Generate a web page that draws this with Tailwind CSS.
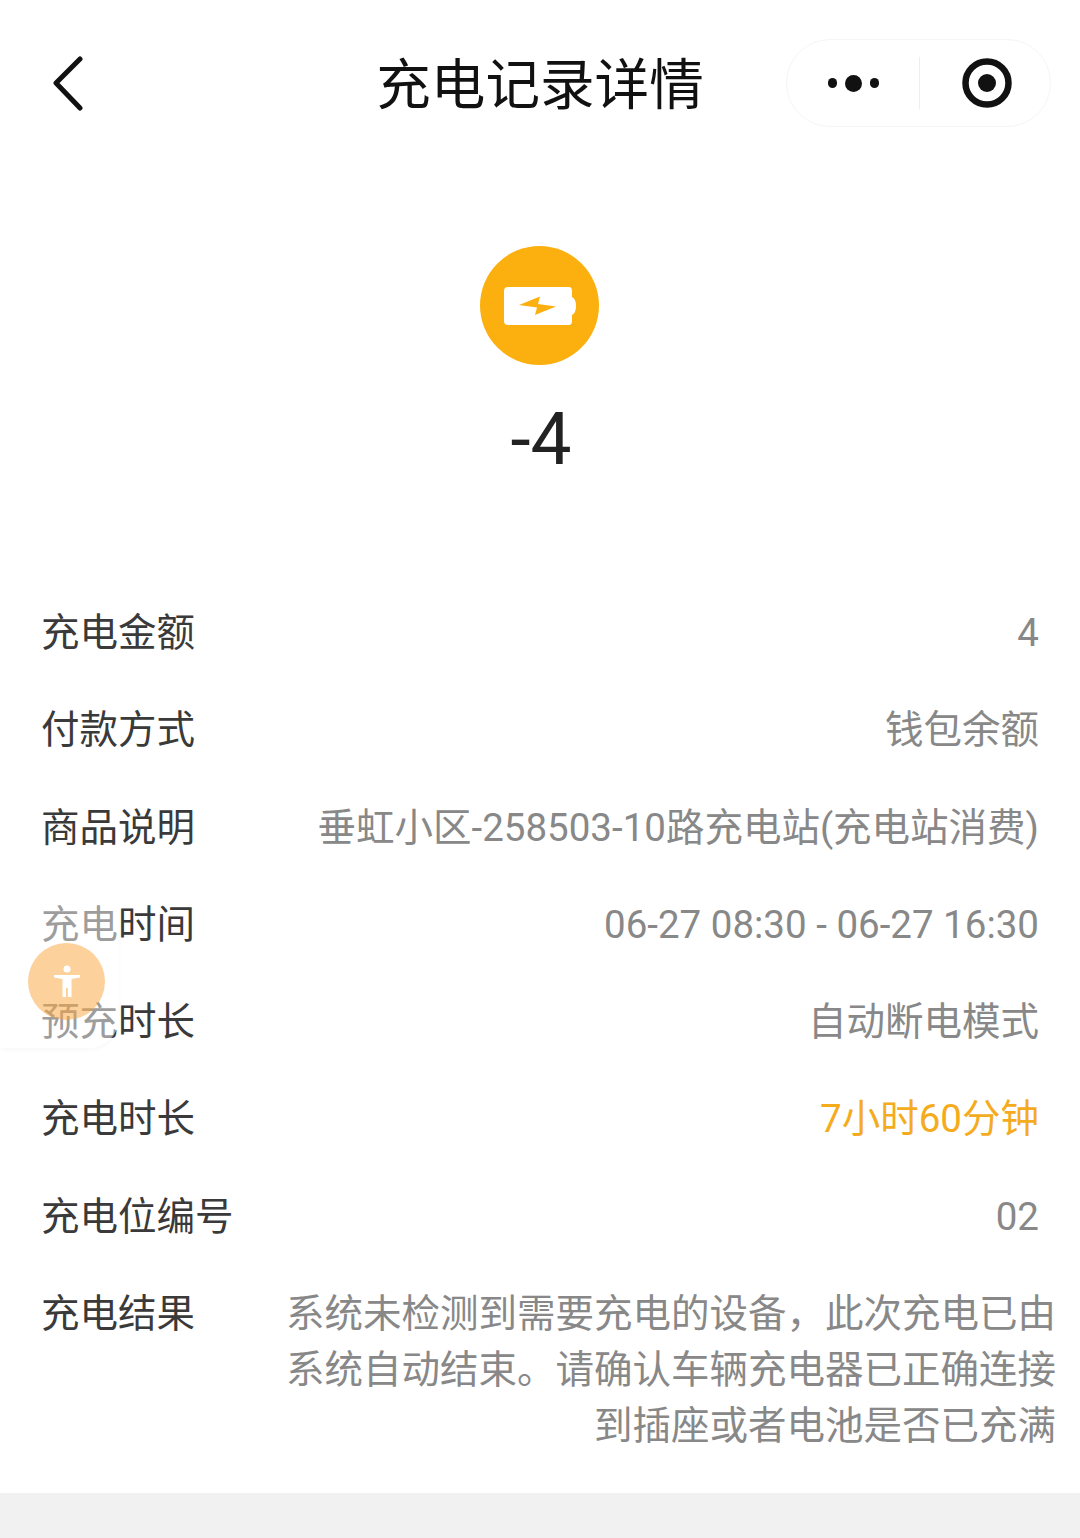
<!DOCTYPE html>
<html lang="zh-CN">
<head>
  <meta charset="UTF-8" />
  <meta name="viewport" content="width=device-width, initial-scale=1.0" />
  <title>充电记录详情</title>
  <script src="https://cdn.jsdelivr.net/npm/@tailwindcss/browser@4"></script>
</head>
<body class="bg-white font-['Roboto','Noto_Sans_CJK_SC',sans-serif] text-[#3a3a3a]">
  <div class="relative w-[1080px] h-[1538px] overflow-hidden flex flex-col">
    <!-- nav bar -->
    <header class="relative h-[168px] shrink-0">
      <div class="flex items-center justify-between pt-[39px] pl-[50px] pr-[29px]">
        <svg class="w-[36px] h-[56px]" viewBox="0 0 36 56" fill="none" stroke="#111" stroke-width="5" stroke-linecap="round" stroke-linejoin="round"><path d="M30 4 L6 28 L30 53" /></svg>
        <div class="flex items-center w-[265px] h-[88px] rounded-full border border-[#f5f5f5]">
          <div class="flex items-center justify-center gap-[8px] w-[132px]">
            <span class="w-[9px] h-[10px] rounded-full bg-[#111]"></span>
            <span class="w-[17px] h-[17px] rounded-full bg-[#111]"></span>
            <span class="w-[9px] h-[10px] rounded-full bg-[#111]"></span>
          </div>
          <div class="w-px h-[52px] bg-[#eee]"></div>
          <div class="flex-1 flex items-center justify-center pl-[4px]">
            <svg class="w-[50px] h-[50px]" viewBox="0 0 50 50" fill="none"><circle cx="25" cy="25" r="21.5" stroke="#111" stroke-width="6.5" /><circle cx="25" cy="25" r="9" fill="#111" /></svg>
          </div>
        </div>
      </div>
      <h1 class="absolute left-0 right-0 top-[53px] text-center text-[54.6px] leading-[64px] text-[#111]">充电记录详情</h1>
    </header>

    <!-- amount -->
    <section class="flex flex-col items-center shrink-0 pt-[78px] h-[437px]">
      <div class="w-[119px] h-[119px] -ml-[1px] rounded-full bg-[#fbb00f] flex items-center justify-center">
        <svg class="w-[74px] h-[40px]" viewBox="0 0 74 40"><path d="M5 1 H66 Q69 1 69 5 V11 Q73 13 73 20 Q73 27 69 29 V35 Q69 39 66 39 H5 Q1 39 1 35 V5 Q1 1 5 1 Z" fill="#fff" /><path d="M16 19 L37 10.5 L35 18 L53 20.5 L32 29 L34 21.5 Z" fill="#fbb00f" /></svg>
      </div>
      <div class="mt-[30px] ml-[2px] text-[73px] leading-[88px] text-[#222]">-4</div>
    </section>

    <!-- detail rows -->
    <section class="flex flex-col text-[38.5px] leading-[56px] pl-[41px] pr-[41px]">
      <div class="flex justify-between h-[97.3px]"><span>充电金额</span><span class="text-[#888]">4</span></div>
      <div class="flex justify-between h-[97.3px]"><span>付款方式</span><span class="text-[#888]">钱包余额</span></div>
      <div class="flex justify-between h-[97.3px]"><span>商品说明</span><span class="text-[#888]">垂虹小区-258503-10路充电站(充电站消费)</span></div>
      <div class="flex justify-between h-[97.3px]"><span>充电时间</span><span class="text-[#888]">06-27 08:30 - 06-27 16:30</span></div>
      <div class="flex justify-between h-[97.3px]"><span>预充时长</span><span class="text-[#888]">自动断电模式</span></div>
      <div class="flex justify-between h-[97.3px]"><span>充电时长</span><span class="text-[#f4ab1e]">7小时60分钟</span></div>
      <div class="flex justify-between h-[97.3px]"><span>充电位编号</span><span class="text-[#888]">02</span></div>
      <div class="flex justify-between -mr-[17px]"><span>充电结果</span><p class="w-[772px] text-right text-[#888]">系统未检测到需要充电的设备，此次充电已由系统自动结束。请确认车辆充电器已正确连接到插座或者电池是否已充满</p></div>
    </section>

    <!-- bottom strip -->
    <div class="absolute left-0 right-0 bottom-0 h-[45px] bg-[#f1f1f1]"></div>

    <!-- floating accessibility button -->
    <div class="absolute left-0 top-[905px] w-[119px] h-[143px] rounded-br-[30px] bg-white/50 shadow-[0_2px_4px_rgba(0,0,0,0.03)]"></div>
    <div class="absolute left-[28px] top-[943px] w-[77px] h-[77px] rounded-full bg-[#f9a43a]/50 flex items-center justify-center">
      <svg class="w-[28px] h-[34px]" viewBox="0 0 28 34" fill="#fff"><circle cx="14" cy="4" r="3.5" /><path d="M1 10 H27 V12.5 L18.5 14 V32 H15 V23 H13 V32 H9.5 V14 L1 12.5 Z" /></svg>
    </div>
  </div>
</body>
</html>
